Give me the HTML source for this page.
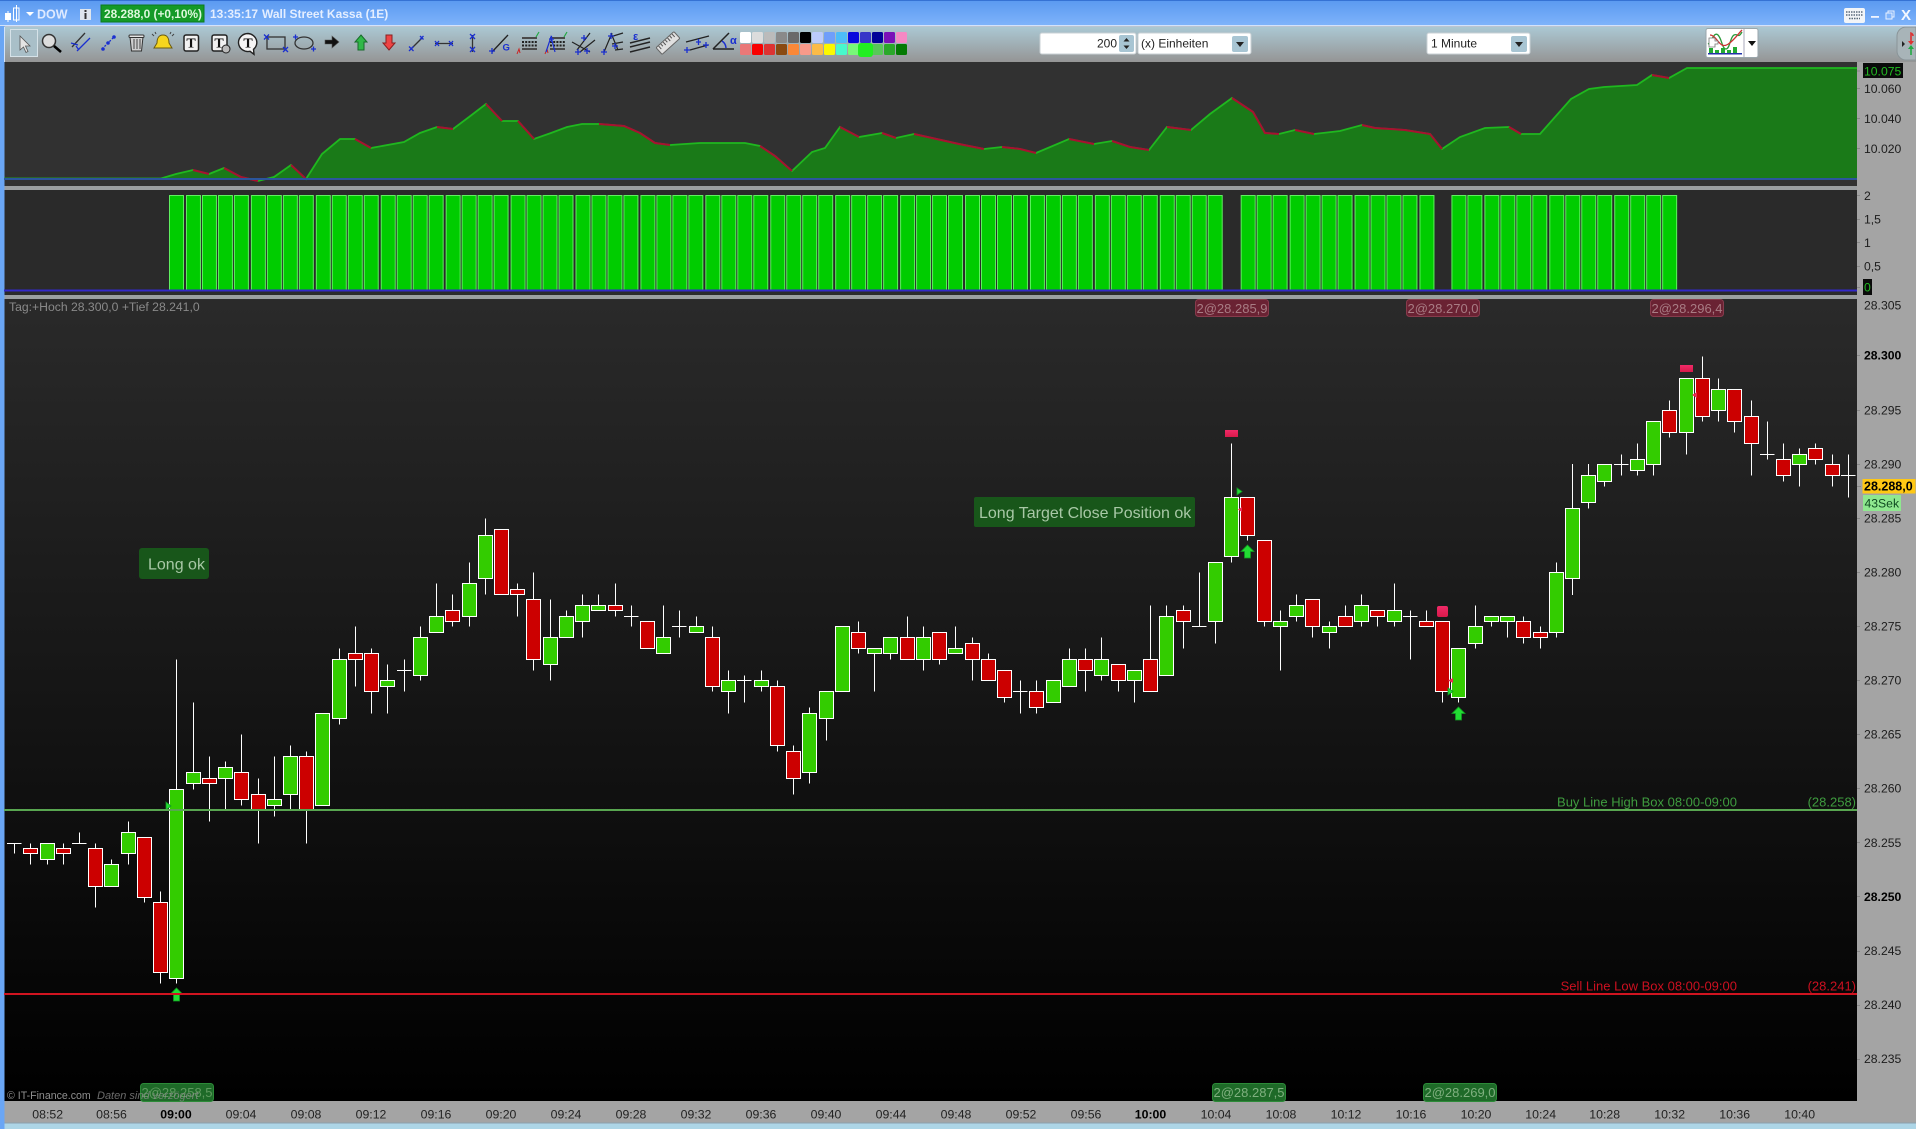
<!DOCTYPE html>
<html><head><meta charset="utf-8"><title>DOW</title>
<style>
html,body{margin:0;padding:0;background:#000;overflow:hidden}
svg{display:block}
text{font-family:"Liberation Sans",sans-serif}
</style></head><body>
<svg xmlns="http://www.w3.org/2000/svg" width="1916" height="1129" viewBox="0 0 1916 1129">
<defs>
<linearGradient id="tb" x1="0" y1="0" x2="0" y2="1"><stop offset="0" stop-color="#5a99f0"/><stop offset="1" stop-color="#7fb4fb"/></linearGradient>
<linearGradient id="tl" x1="0" y1="0" x2="0" y2="1"><stop offset="0" stop-color="#abc8d3"/><stop offset="1" stop-color="#959595"/></linearGradient>
<linearGradient id="mn" x1="0" y1="0" x2="0" y2="1"><stop offset="0" stop-color="#2a2a2a"/><stop offset="1" stop-color="#000"/></linearGradient>
<linearGradient id="pk" x1="0" y1="0" x2="0" y2="1"><stop offset="0" stop-color="#f02a68"/><stop offset="1" stop-color="#d81a4a"/></linearGradient>
<pattern id="bars" patternUnits="userSpaceOnUse" x="169" y="195" width="64.92" height="95">
<g fill="#00cc00" stroke="#60f060" stroke-width="1" shape-rendering="crispEdges">
<rect x=".5" y=".5" width="14" height="95"/><rect x="17.5" y=".5" width="14" height="95"/><rect x="33.5" y=".5" width="14" height="95"/><rect x="49.5" y=".5" width="14" height="95"/>
</g></pattern>
</defs>

<!-- frame -->
<rect width="1916" height="1129" fill="#a4a4a4"/>
<rect width="1916" height="26" fill="url(#tb)"/>
<rect width="1916" height="1" fill="#3572d4"/>
<rect y="25" width="1916" height="1.5" fill="#d2e3fb"/>
<rect y="27" width="1916" height="35" fill="url(#tl)"/>
<rect y="1123" width="1916" height="6" fill="#add5e6"/>
<rect y="1122.5" width="1916" height="1" fill="#8aa0ad"/>

<!-- panels -->
<rect x="4" y="62" width="1853" height="124" fill="#313131"/>
<rect x="4" y="186" width="1853" height="4" fill="#9a9ea0"/>
<rect x="4" y="190" width="1853" height="105" fill="#2a2a2a"/>
<rect x="4" y="295" width="1853" height="4" fill="#9a9ea0"/>
<rect x="4" y="299" width="1853" height="802" fill="url(#mn)"/>
<rect x="0" y="26" width="4.5" height="1103" fill="#6aa6f5"/>
<rect x="4" y="27" width="1" height="35" fill="#d2e3fb"/>

<!-- area chart -->
<path fill="#1a7a18" d="M161,179 176,174 193,170 209,174 224,168 241,177 258,181 274,177 291,165 306,179 322,154 340,139 355,139 371,148 404,142 420,133 437,127 453,129 469,117 486,104 502,121 518,121 534,139 551,133 567,127 582,124 599,124 624,126 640,133 655,143 670,145 700,143 745,143 760,146 775,156 792,171 812,152 825,148 840,127 859,137 882,133 896,138 914,134 941,140 959,144 984,149 1002,147 1020,149 1036,153 1069,139 1094,144 1112,141 1130,147 1149,150 1167,127 1191,130 1210,114 1232,98 1253,112 1265,133 1279,134 1295,130 1314,134 1340,131 1362,125 1375,128 1405,130 1430,134 1442,149 1460,137 1485,128 1509,127 1521,134 1540,134 1571,99 1589,89 1604,87 1637,85 1652,75 1669,78 1687,68 1857,68 1857,179z"/>
<path fill="none" stroke="#1fb81f" stroke-width="1.8" d="M4,178.5H161L176,174 193,170 209,174 224,168 241,177 258,181 274,177 291,165 306,179 322,154 340,139 355,139 371,148 404,142 420,133 437,127 453,129 469,117 486,104 502,121 518,121 534,139 551,133 567,127 582,124 599,124 624,126 640,133 655,143 670,145 700,143 745,143 760,146 775,156 792,171 812,152 825,148 840,127 859,137 882,133 896,138 914,134 941,140 959,144 984,149 1002,147 1020,149 1036,153 1069,139 1094,144 1112,141 1130,147 1149,150 1167,127 1191,130 1210,114 1232,98 1253,112 1265,133 1279,134 1295,130 1314,134 1340,131 1362,125 1375,128 1405,130 1430,134 1442,149 1460,137 1485,128 1509,127 1521,134 1540,134 1571,99 1589,89 1604,87 1637,85 1652,75 1669,78 1687,68 1857,68"/>
<path fill="none" stroke="#a81030" stroke-width="2" d="M193,170 209,174M224,168 241,177 258,181M291,165 306,179M355,139 371,148M437,127 453,129M486,104 502,121M518,121 534,139M599,124 624,126 640,133 655,143 670,145M760,146 775,156 792,171M840,127 859,137M882,133 896,138M914,134 941,140 959,144 984,149M1002,147 1020,149 1036,153M1069,139 1094,144M1112,141 1130,147 1149,150M1167,127 1191,130M1232,98 1253,112 1265,133 1279,134M1295,130 1314,134M1362,125 1375,128 1405,130 1430,134 1442,149M1509,127 1521,134M1652,75 1669,78"/>
<rect x="4" y="178" width="1853" height="2" fill="#2b559c"/>

<!-- bars -->
<rect x="169" y="195" width="1508.5" height="95" fill="url(#bars)"/>
<rect x="1224" y="195" width="16" height="95" fill="#2a2a2a"/>
<rect x="1435" y="195" width="16" height="95" fill="#2a2a2a"/>
<rect x="1677.5" y="195" width="20" height="95" fill="#2a2a2a"/>
<rect x="4" y="289.5" width="1853" height="2" fill="#3228c8"/>

<!-- candles -->
<g shape-rendering="crispEdges" stroke="#fff" stroke-width="3">
<g transform="translate(0,640) scale(.33333)">
<path fill="none" d="M43,610V640M21,610H65M91,610V673M142,610V673M190,610V673M238,577V610M216,610H260M286,610V802M334,658V739M385,544V673M433,592V787M481,754V1030M529,58V1030M580,187V448M628,349V545M676,364V508M724,283V496M775,415V610M823,349V530M871,316V508M919,334V610"/>
<path fill="#33cc00" d="M121,610h42V658h-42zM313,673h42V739h-42zM364,577h42V640h-42zM508,448h42V1015h-42zM559,397h42V430h-42zM655,382h42V415h-42zM802,478h42V496h-42zM850,349h42V463h-42zM946,220h42V496h-42z"/>
<path fill="#cc0000" d="M70,625h42V640h-42zM169,625h42V640h-42zM265,625h42V739h-42zM412,592h42V772h-42zM460,787h42V997h-42zM607,415h42V430h-42zM703,397h42V478h-42zM754,463h42V508h-42zM898,349h42V508h-42z"/>
</g>
<g transform="translate(120,520) scale(.33333)">
<path fill="none" d="M658,385V613M706,319V500M754,385V580M802,433V580M853,418V515M831,451H875M901,319V482M949,190V337M997,223V320M1048,127V320"/>
<path fill="#33cc00" d="M637,418h42V595h-42zM781,482h42V499h-42zM880,352h42V466h-42zM928,289h42V337h-42zM1027,190h42V289h-42z"/>
<path fill="#cc0000" d="M685,400h42V418h-42zM733,400h42V514h-42zM976,271h42V304h-42z"/>
</g>
<g transform="translate(480,500) scale(.33333)">
<path fill="none" d="M16,55V284M112,250V350M160,217V512M211,298V542M259,331V412M307,283V413M355,283V331M406,250V350M454,316V380M432,349H476M550,316V460M598,331V413M576,379H620M649,349V397M697,379V575M745,511V641M793,526V608M771,541H815M844,511V575M892,541V754M940,736V884M988,622V851M1039,574V722"/>
<path fill="#33cc00" d="M-5,106h42V235h-42zM190,412h42V493h-42zM238,349h42V412h-42zM286,316h42V364h-42zM334,316h42V331h-42zM529,412h42V460h-42zM628,379h42V397h-42zM724,541h42V574h-42zM823,541h42V559h-42zM967,640h42V817h-42zM1018,574h42V655h-42zM1066,379h42V574h-42z"/>
<path fill="#cc0000" d="M43,88h42V283h-42zM91,268h42V283h-42zM139,298h42V478h-42zM385,316h42V331h-42zM481,364h42V445h-42zM676,412h42V559h-42zM871,559h42V736h-42zM919,754h42V835h-42z"/>
</g>
<g transform="translate(840,500) scale(.33333)">
<path fill="none" d="M55,364V461M103,445V575M151,412V479M202,349V478M250,379V512M298,397V494M346,379V460M397,412V542M445,460V541M493,511V608M541,541V641M519,574H563M589,541V641M688,445V559M736,445V575M784,412V542M835,493V575M883,511V608M931,316V574M979,316V526M1030,316V445M1078,217V379M1056,379H1100"/>
<path fill="#33cc00" d="M82,445h42V460h-42zM130,412h42V460h-42zM229,412h42V478h-42zM325,445h42V460h-42zM619,541h42V607h-42zM667,478h42V559h-42zM763,478h42V526h-42zM862,511h42V541h-42zM958,349h42V526h-42z"/>
<path fill="#cc0000" d="M34,397h42V445h-42zM181,412h42V478h-42zM277,397h42V478h-42zM376,430h42V478h-42zM424,478h42V541h-42zM472,511h42V592h-42zM568,574h42V622h-42zM715,478h42V511h-42zM814,493h42V541h-42zM910,478h42V574h-42zM1009,331h42V364h-42z"/>
</g>
<g transform="translate(1180,280) scale(.33333)">
<path fill="none" d="M106,847V1090M154,490V848M202,652V782M253,782V1040M301,991V1172M349,943V1025M397,958V1073M448,1024V1106M496,976V1039M544,943V1040M592,991V1040M643,910V1040M691,991V1138M669,1009H713M739,991V1039M787,1024V1268M835,1105V1268M886,976V1106M934,1009V1040M982,1009V1073M1030,1009V1090M1081,1039V1106M1129,847V1073M1177,552V945M1225,552V686M1273,553V620M1324,523V587M1302,553H1346M1372,490V587M1420,424V587M1468,361V473"/>
<path fill="#33cc00" d="M85,847h42V1024h-42zM133,652h42V829h-42zM280,1024h42V1039h-42zM328,976h42V1009h-42zM427,1039h42V1057h-42zM523,976h42V1024h-42zM622,991h42V1024h-42zM814,1105h42V1252h-42zM865,1039h42V1090h-42zM913,1009h42V1024h-42zM961,1009h42V1024h-42zM1108,877h42V1057h-42zM1156,685h42V895h-42zM1204,586h42V667h-42zM1252,553h42V604h-42zM1351,538h42V571h-42zM1399,424h42V553h-42z"/>
<path fill="#cc0000" d="M181,652h42V766h-42zM232,782h42V1024h-42zM376,958h42V1039h-42zM475,1009h42V1039h-42zM571,991h42V1009h-42zM718,1024h42V1039h-42zM766,1024h42V1234h-42zM1009,1024h42V1072h-42zM1060,1057h42V1072h-42zM1447,391h42V457h-42z"/>
</g>
<g transform="translate(1600,330) scale(.33333)">
<path fill="none" d="M259,145V374M307,79V275M355,145V274M403,178V308M454,211V437M502,274V388M480,373H524M550,340V455M598,355V470M646,340V404M697,373V470M745,373V503M723,436H767"/>
<path fill="#33cc00" d="M238,145h42V307h-42zM334,178h42V241h-42zM577,373h42V403h-42z"/>
<path fill="#cc0000" d="M286,145h42V259h-42zM382,178h42V274h-42zM433,259h42V340h-42zM529,388h42V436h-42zM625,355h42V388h-42zM676,403h42V436h-42z"/>
</g>
</g>

<!-- markers -->
<rect x="1225" y="430" width="13" height="7" fill="url(#pk)"/>
<rect x="1680" y="365" width="13" height="7" fill="url(#pk)"/>
<rect x="1437" y="606" width="11" height="11" rx="2" fill="url(#pk)"/>
<g fill="#22dd33" stroke="#119922" stroke-width=".8">
<path d="M176.5,988l6.5,6.5h-3.5V1001h-6v-6.5H170z"/>
<path d="M1247.5,545l6.5,6.5h-3.5V558h-6v-6.5H1241z"/>
<path d="M1458.5,707l6.5,6.5h-3.5V720h-6v-6.5H1452z"/>
<path d="M1237,488l5,3.5-5,3.5z"/>
<path d="M1448,688l5,3.5-5,3.5z"/>
<path d="M166,802l5,4-5,4z"/>
</g>
<g fill="#e82a50"><path d="M1242,507l-4,2.5 4,2.5z"/><path d="M1453,678l-5,2.5 5,2.5z"/><path d="M1697,392l-5,3 5,3z"/></g>

<!-- horizontal lines -->
<rect x="4" y="809" width="1853" height="2" fill="#58a650"/>
<rect x="4" y="993" width="1853" height="2" fill="#d01420"/>
<text x="1737" y="806.5" text-anchor="end" font-size="13" fill="#3f9c3f">Buy Line High Box 08:00-09:00</text>
<text x="1856" y="806.5" text-anchor="end" font-size="13" fill="#3f9c3f">(28.258)</text>
<text x="1737" y="990.5" text-anchor="end" font-size="13" fill="#cc1020">Sell Line Low Box 08:00-09:00</text>
<text x="1856" y="990.5" text-anchor="end" font-size="13" fill="#cc1020">(28.241)</text>

<!-- annotations -->
<rect x="139" y="548" width="70" height="31" rx="3" fill="#18561a"/>
<text x="148" y="569.5" font-size="16" fill="#a8c8a6">Long ok</text>
<rect x="974" y="497" width="221" height="30" rx="2" fill="#18561a"/>
<text x="979" y="518" font-size="16" fill="#a8c8a6">Long Target Close Position ok</text>

<g font-size="13" fill="#a87c84">
<rect x="1195.5" y="299.5" width="73" height="17" rx="3" fill="#6a2233" stroke="#873b4c"/>
<text x="1232" y="313" text-anchor="middle">2@28.285,9</text>
<rect x="1406.5" y="299.5" width="73" height="17" rx="3" fill="#6a2233" stroke="#873b4c"/>
<text x="1443" y="313" text-anchor="middle">2@28.270,0</text>
<rect x="1650.5" y="299.5" width="73" height="17" rx="3" fill="#6a2233" stroke="#873b4c"/>
<text x="1687" y="313" text-anchor="middle">2@28.296,4</text>
</g>
<text x="7" y="1099" font-size="10.6" fill="#8f8f8f">© IT-Finance.com</text>
<g font-size="13" fill="#5f9a5f">
<rect x="140.5" y="1083.5" width="73" height="18" rx="3" fill="#1e6a28" stroke="#2c8a38"/>
<text x="177" y="1097" text-anchor="middle">2@28.258,5</text>
<rect x="1212.5" y="1083.5" width="73" height="18" rx="3" fill="#1e6a28" stroke="#2c8a38"/>
<text x="1249" y="1097" text-anchor="middle" fill="#7fb07f">2@28.287,5</text>
<rect x="1423.5" y="1083.5" width="73" height="18" rx="3" fill="#1e6a28" stroke="#2c8a38"/>
<text x="1460" y="1097" text-anchor="middle" fill="#7fb07f">2@28.269,0</text>
</g>
<text x="97" y="1099" font-size="11" font-style="italic" fill="#8f8f8f" fill-opacity=".75">Daten sind verzögert</text>
<text x="9" y="311" font-size="12.2" fill="#8a8a8a">Tag:+Hoch 28.300,0 +Tief 28.241,0</text>

<!-- y axis -->
<g font-size="12.2" fill="#1c1c1c">
<rect x="1863" y="63" width="40" height="15" fill="#0a0a0a"/>
<text x="1864" y="75.5" fill="#22bb22">10.075</text>
<text x="1864" y="93">10.060</text>
<text x="1864" y="123">10.040</text>
<text x="1864" y="153">10.020</text>
<text x="1864" y="200">2</text>
<text x="1864" y="223.5">1,5</text>
<text x="1864" y="247">1</text>
<text x="1864" y="270.5">0,5</text>
<rect x="1863" y="279" width="9" height="16" fill="#0a0a0a"/>
<text x="1864" y="291.5" fill="#22bb22">0</text>
<text x="1864" y="309.5">28.305</text>
<text x="1864" y="359.5" font-weight="bold" fill="#000">28.300</text>
<text x="1864" y="414.5">28.295</text>
<text x="1864" y="468.5">28.290</text>
<text x="1864" y="522.5">28.285</text>
<text x="1864" y="576.5">28.280</text>
<text x="1864" y="630.5">28.275</text>
<text x="1864" y="684.5">28.270</text>
<text x="1864" y="738.5">28.265</text>
<text x="1864" y="792.5">28.260</text>
<text x="1864" y="847">28.255</text>
<text x="1864" y="901" font-weight="bold" fill="#000">28.250</text>
<text x="1864" y="955">28.245</text>
<text x="1864" y="1009">28.240</text>
<text x="1864" y="1063">28.235</text>
</g>
<path stroke="#888" stroke-width="1" d="M1857,71h3M1857,88.5h3M1857,118.5h3M1857,148.5h3M1857,195.5h3M1857,219.5h3M1857,242.5h3M1857,266.5h3M1857,287.5h3M1857,355.5h3M1857,410.5h3M1857,464.5h3M1857,518.5h3M1857,572.5h3M1857,626.5h3M1857,680.5h3M1857,734.5h3M1857,788.5h3M1857,842.5h3M1857,896.5h3M1857,951.5h3M1857,1005.5h3M1857,1059.5h3M1857,486.5h4"/>
<rect x="1862.5" y="479" width="53" height="14.5" fill="#ffc814"/>
<text x="1864" y="490.5" font-size="12.5" font-weight="bold" fill="#000">28.288,0</text>
<rect x="1863" y="495" width="38" height="16" fill="#8fe88f"/>
<text x="1864.5" y="507.5" font-size="12.2" fill="#0f4a20">43Sek</text>

<!-- x axis -->
<g font-size="12.3" fill="#222" text-anchor="middle">
<text x="47.7" y="1118.5">08:52</text><text x="111.5" y="1118.5">08:56</text>
<text x="176" y="1118.5" font-weight="bold" fill="#000">09:00</text>
<text x="241" y="1118.5">09:04</text><text x="306" y="1118.5">09:08</text><text x="371" y="1118.5">09:12</text><text x="436" y="1118.5">09:16</text>
<text x="501" y="1118.5">09:20</text><text x="566" y="1118.5">09:24</text><text x="631" y="1118.5">09:28</text><text x="696" y="1118.5">09:32</text>
<text x="761" y="1118.5">09:36</text><text x="826" y="1118.5">09:40</text><text x="891" y="1118.5">09:44</text><text x="956" y="1118.5">09:48</text>
<text x="1021" y="1118.5">09:52</text><text x="1086" y="1118.5">09:56</text>
<text x="1150.5" y="1118.5" font-weight="bold" fill="#000">10:00</text>
<text x="1216" y="1118.5">10:04</text><text x="1281" y="1118.5">10:08</text><text x="1346" y="1118.5">10:12</text><text x="1411" y="1118.5">10:16</text>
<text x="1476" y="1118.5">10:20</text><text x="1540.7" y="1118.5">10:24</text><text x="1604.7" y="1118.5">10:28</text><text x="1669.7" y="1118.5">10:32</text>
<text x="1734.7" y="1118.5">10:36</text><text x="1799.7" y="1118.5">10:40</text>
</g>

<!-- title bar -->
<g fill="#fff"><rect x="5" y="13" width="6" height="7"/><rect x="7.5" y="11" width="1" height="11"/><rect x="13.5" y="8" width="5.5" height="12" fill="none" stroke="#fff"/><rect x="16" y="5" width="1" height="17"/><path d="M26,12h8l-4,4z"/></g>
<text x="37" y="18.5" font-size="12.5" font-weight="bold" fill="#dfeaff">DOW</text>
<rect x="80" y="9" width="11" height="11" fill="#dfe6ee"/><rect x="84.5" y="10" width="2" height="2" fill="#333"/><rect x="84.5" y="13" width="2" height="6" fill="#333"/>
<rect x="101" y="5" width="103" height="17" fill="#149a28" stroke="#0d7a1e"/>
<text x="104" y="18" font-size="12.2" font-weight="bold" fill="#dcf8dc" textLength="98" lengthAdjust="spacingAndGlyphs">28.288,0 (+0,10%)</text>
<text x="210" y="18" font-size="12" font-weight="bold" fill="#e4eeff">13:35:17</text>
<text x="262" y="18" font-size="12" font-weight="bold" fill="#e4eeff">Wall Street Kassa (1E)</text>
<rect x="1844" y="8" width="21" height="15" rx="2" fill="#f2f5f8"/>
<path stroke="#5a6a7a" stroke-width="1.5" stroke-dasharray="1.5 1" d="M1846,12h17M1846,15h17M1849,18.5h11"/>
<rect x="1871" y="16" width="8" height="1.8" fill="#f0f5ff"/>
<rect x="1888" y="11" width="6" height="6" fill="none" stroke="#e8f1ff"/><rect x="1886" y="13" width="6" height="6" fill="#7fb4fb" stroke="#e8f1ff"/>
<text x="1901" y="20" font-size="15" font-weight="bold" fill="#f4f8ff">X</text>

<!-- toolbar icons -->
<rect x="10.5" y="29.5" width="27" height="27" fill="#a9bfc8" stroke="#d6e2e8"/>
<path d="M20,36v14l3.5,-3 2.5,5.5 2,-1 -2.5,-5.5h4.5z" fill="#e4e4e4" stroke="#555" stroke-width=".8"/>
<circle cx="49" cy="41" r="6.5" fill="#dcdcdc" stroke="#333" stroke-width="1.5"/><path d="M54,46l7,6" stroke="#000" stroke-width="2.6"/>
<path d="M72,47L85,33" stroke="#333" stroke-width="1.3"/><path d="M77,51L90,38M71,43l7,2M76,46l3,4" stroke="#1a2fd0" stroke-width="1.3" fill="none"/>
<path d="M102,49L114,37" stroke="#1a2fd0" stroke-width="1.3" stroke-dasharray="2 1.5"/><circle cx="103" cy="49" r="1.8" fill="#1a2fd0"/><circle cx="108" cy="43" r="1.8" fill="#1a2fd0"/><circle cx="114" cy="37" r="1.8" fill="#1a2fd0"/>
<path d="M130,37h13l-1.5,14h-10z" fill="#cfcfcf" stroke="#333"/><rect x="129" y="35" width="15" height="2.5" rx="1" fill="#e5e5e5" stroke="#333" stroke-width="1"/><path d="M134,39v10M137,39v10M140,39v10" stroke="#444"/>
<path d="M163,35c-4.5,0-6,4-6,8l-3,5h18l-3,-5c0,-4-1.500,-8-6,-8z" fill="#f6d51e" stroke="#6a5a10"/><path d="M154,36l-2,-2M172,36l2,-2M156,34l-1,-2M170,34l1,-2" stroke="#444" stroke-width="1"/>
<rect x="184" y="35" width="14.500" height="16" rx="2" fill="#f2f2f2" stroke="#222" stroke-width="1.5"/><text x="191" y="47.500" font-size="14" font-weight="bold" text-anchor="middle" fill="#111" style="font-family:'Liberation Serif',serif">T</text>
<rect x="212" y="35" width="15" height="16" rx="2" fill="#f2f2f2" stroke="#222" stroke-width="1.5"/><text x="219" y="47.500" font-size="14" font-weight="bold" text-anchor="middle" fill="#111" style="font-family:'Liberation Serif',serif">T</text><circle cx="226" cy="49" r="4" fill="#bbb" stroke="#222"/>
<path d="M248,33.500a9.500,9 0 1 0 2,17.800l4,3 -.5,-5a9.500,9 0 0 0 -5.500,-15.800z" fill="#f5f5f5" stroke="#222" stroke-width="1.4"/><text x="248" y="47.500" font-size="14" font-weight="bold" text-anchor="middle" fill="#111" style="font-family:'Liberation Serif',serif">T</text>
<rect x="267" y="37" width="18" height="12" fill="none" stroke="#333" stroke-width="1.3"/><path d="M264,34.500l5,5M269,34.500l-5,5M283,47l5,5M288,47l-5,5" stroke="#1a2fd0" stroke-width="1.3"/>
<ellipse cx="304" cy="43" rx="9" ry="6" fill="none" stroke="#333" stroke-width="1.3"/><path d="M293,37h5M295.500,34.500v5M311,49h5M313.500,46.500v5" stroke="#1a2fd0" stroke-width="1.3"/>
<path d="M325,40h7v-4l7,6 -7,6v-4h-7z" fill="#111" stroke="#555" stroke-width=".6"/>
<path d="M361,35l6,7h-3v8h-6v-8h-3z" fill="#30b848" stroke="#176a2a"/>
<path d="M389,50l6,-7h-3v-8h-6v8h-3z" fill="#ee4444" stroke="#8a2020"/>
<path d="M411,49L422,38" stroke="#333" stroke-width="1.3"/><path d="M409,46.500l4.500,4.500M413.500,46.500l-4.500,4.500M420,36l3.500,3.500M423.500,36l-3.500,3.500" stroke="#1a2fd0" stroke-width="1.3"/>
<path d="M435,43.500H453" stroke="#333" stroke-width="1.3"/><path d="M435,41l4,5M439,41l-4,5M449,41l4,5M453,41l-4,5" stroke="#1a2fd0" stroke-width="1.3"/>
<path d="M472.500,35V52" stroke="#333" stroke-width="1.3"/><path d="M470,34l5,5M475,34l-5,5M470,47l5,5M475,47l-5,5" stroke="#1a2fd0" stroke-width="1.3"/>
<path d="M492,52L508,35" stroke="#222" stroke-width="1.3"/><path d="M489,51h6M492,48v6" stroke="#1a2fd0" stroke-width="1.3"/><text x="502.500" y="50.500" font-size="9.500" font-weight="bold" fill="#1a2fd0">G</text>
<g stroke="#4a4a4a" stroke-width="2"><path d="M522,38h15M522,49h15"/><path d="M522,42h15M522,45.500h15" stroke-dasharray="2 1.200" stroke="#222"/><path d="M550,38h15M550,49h15"/><path d="M550,42h15M550,45.500h15" stroke-dasharray="2 1.200" stroke="#222"/></g>
<path d="M536,37l3,-5M564,37l3,-5" stroke="#22aa44" stroke-width="1.200"/><path d="M517,54l2,-5 1,4M545,54l2,-5 1,4" stroke="#cc2222" fill="none"/>
<path d="M549,39h5M551.500,36v6M546,52l5,-15 4,15" stroke="#1a2fd0" stroke-width="1.200" fill="none"/>
<path d="M577,50L590,33M580,52L595,40M572,42L590,52" stroke="#222" stroke-width="1.200" fill="none"/><path d="M575,52h6M578,49v6M581,38h6M584,35v6M584,51h6M587,48v6" stroke="#1a2fd0" stroke-width="1.300"/>
<path d="M604,52L612,33M610,37L623,33M612,44L623,42M615,50L623,49M611,33L618,50" stroke="#222" stroke-width="1.200" fill="none"/><path d="M601,52h6M604,49v6M608,36h6M611,33v6M612,46h6M615,43v6" stroke="#1a2fd0" stroke-width="1.300"/>
<path d="M630,43L650,38M630,47L650,42M630,52L650,47" stroke="#222" stroke-width="1.500"/><text x="633" y="40" font-size="11" font-weight="bold" fill="#1a2fd0">ε</text>
<g transform="rotate(-42 668 43)"><rect x="656" y="38.500" width="24" height="9" rx="1" fill="#e0e0e0" stroke="#666"/><path d="M659,39v4M662,39v3M665,39v4M668,39v3M671,39v4M674,39v3M677,39v4" stroke="#555"/></g>
<path d="M686,42L709,36M690,50L708,45" stroke="#222" stroke-width="1.300"/><path d="M684,50h6M687,47v6M696,42h5M698.500,39v6M703,45h6M706,42v6" stroke="#1a2fd0" stroke-width="1.300"/>
<path d="M713,49H734M713,49L729,33" stroke="#222" stroke-width="1.500" fill="none"/><path d="M722,41a9,9 0 0 1 4,7" stroke="#1a2fd0" stroke-width="1.500" fill="none"/><text x="730" y="44" font-size="11" font-weight="bold" fill="#1a2fd0">α</text>

<!-- palette -->
<g>
<rect x="740" y="32" width="11" height="11" rx="1.500" fill="#fff"/><rect x="752" y="32" width="11" height="11" rx="1.500" fill="#dcdcdc"/><rect x="764" y="32" width="11" height="11" rx="1.500" fill="#bbb"/><rect x="776" y="32" width="11" height="11" rx="1.500" fill="#8a8a8a"/><rect x="788" y="32" width="11" height="11" rx="1.500" fill="#6a6a6a"/><rect x="800" y="32" width="11" height="11" rx="1.500" fill="#000"/><rect x="812" y="32" width="11" height="11" rx="1.500" fill="#bccbfb"/><rect x="824" y="32" width="11" height="11" rx="1.500" fill="#6f9efa"/><rect x="836" y="32" width="11" height="11" rx="1.500" fill="#4dbcf8"/><rect x="848" y="32" width="11" height="11" rx="1.500" fill="#0808dd"/><rect x="860" y="32" width="11" height="11" rx="1.500" fill="#3636c8"/><rect x="872" y="32" width="11" height="11" rx="1.500" fill="#020298"/><rect x="884" y="32" width="11" height="11" rx="1.500" fill="#7a10b8"/><rect x="896" y="32" width="11" height="11" rx="1.500" fill="#f588c4"/>
<rect x="740" y="44" width="11" height="11" rx="1.500" fill="#ea7878"/><rect x="752" y="44" width="11" height="11" rx="1.500" fill="#f80000"/><rect x="764" y="44" width="11" height="11" rx="1.500" fill="#dd3333"/><rect x="776" y="44" width="11" height="11" rx="1.500" fill="#8a4a12"/><rect x="788" y="44" width="11" height="11" rx="1.500" fill="#fa8838"/><rect x="800" y="44" width="11" height="11" rx="1.500" fill="#f89a8a"/><rect x="812" y="44" width="11" height="11" rx="1.500" fill="#fbbb48"/><rect x="824" y="44" width="11" height="11" rx="1.500" fill="#fbf800"/><rect x="836" y="44" width="11" height="11" rx="1.500" fill="#48f8cc"/><rect x="848" y="44" width="11" height="11" rx="1.500" fill="#78f878"/><rect x="872" y="44" width="11" height="11" rx="1.500" fill="#58c858"/><rect x="884" y="44" width="11" height="11" rx="1.500" fill="#2aa82a"/><rect x="896" y="44" width="11" height="11" rx="1.500" fill="#047a04"/>
</g>
<rect x="858" y="43" width="15" height="14" rx="3" fill="#22ee22"/>

<!-- inputs -->
<rect x="1040" y="33" width="96" height="21" rx="2" fill="#fff" stroke="#c9d0d4"/>
<text x="1117" y="47.500" font-size="12" fill="#222" text-anchor="end">200</text>
<rect x="1119" y="35" width="15" height="17" rx="2" fill="#a8c5d3"/><path d="M1123.500,41.500h6l-3,-3.500zM1123.500,45.500h6l-3,3.500z" fill="#222"/>
<rect x="1138" y="33" width="113" height="21" rx="2" fill="#fff" stroke="#c9d0d4"/>
<text x="1141" y="47.500" font-size="12" fill="#222">(x) Einheiten</text>
<rect x="1232" y="36" width="16" height="16" rx="2" fill="#a8c5d3"/><path d="M1236,42h8l-4,5z" fill="#222"/>
<rect x="1427" y="33" width="103" height="21" rx="2" fill="#fff" stroke="#c9d0d4"/>
<text x="1431" y="47.500" font-size="12" fill="#222">1 Minute</text>
<rect x="1511" y="36" width="16" height="16" rx="2" fill="#a8c5d3"/><path d="M1515,42h8l-4,5z" fill="#222"/>

<!-- chart type button -->
<rect x="1706" y="28.500" width="52" height="29" rx="2" fill="#fff" stroke="#9aa6ac"/>
<path d="M1744,29V57" stroke="#aab"/>
<path d="M1750,41h8l-4,5z" fill="#111" transform="translate(-2,0)"/>
<path d="M1708,44c4,-2 6,-13 10,-9s4,14 8,14 4,-12 8,-14 4,4 8,-3" fill="none" stroke="#2a9a3a" stroke-width="1.300"/>
<path d="M1710,35c5,0 8,8 12,10s8,-2 12,-6 5,-6 8,-9" fill="none" stroke="#cc3333" stroke-width="1.300"/>
<rect x="1708" y="53" width="34" height="1.500" fill="#2233aa"/>
<path d="M1709,48h4v5h-4zM1715,50h4v3h-4zM1721,48h4v5h-4zM1727,50h4v3h-4zM1733,47h4v6h-4z" fill="#22aa33"/>
<path d="M1709,38h6v3h3v3h-3v3h-6z" fill="#fff" stroke="#777" stroke-width=".8"/>

<!-- right round icon -->
<path d="M1916,27h-10a9,9 0 0 0 -9,9v15a9,9 0 0 0 9,9h10z" fill="#a8b4b8" stroke="#8a9498"/>
<path d="M1905,44l-3,-3v6z" fill="#222"/>
<path d="M1910,33c3,0 3,3 3,3M1911,44v-10" stroke="#dd3333" stroke-width="1.600" fill="none"/><path d="M1908,41l3,4 3,-4z" fill="#dd3333"/>
<path d="M1911,46v9" stroke="#22aa44" stroke-width="1.600"/><path d="M1908,49l3,-4 3,4z" fill="#22aa44"/>
</svg>
</body></html>
